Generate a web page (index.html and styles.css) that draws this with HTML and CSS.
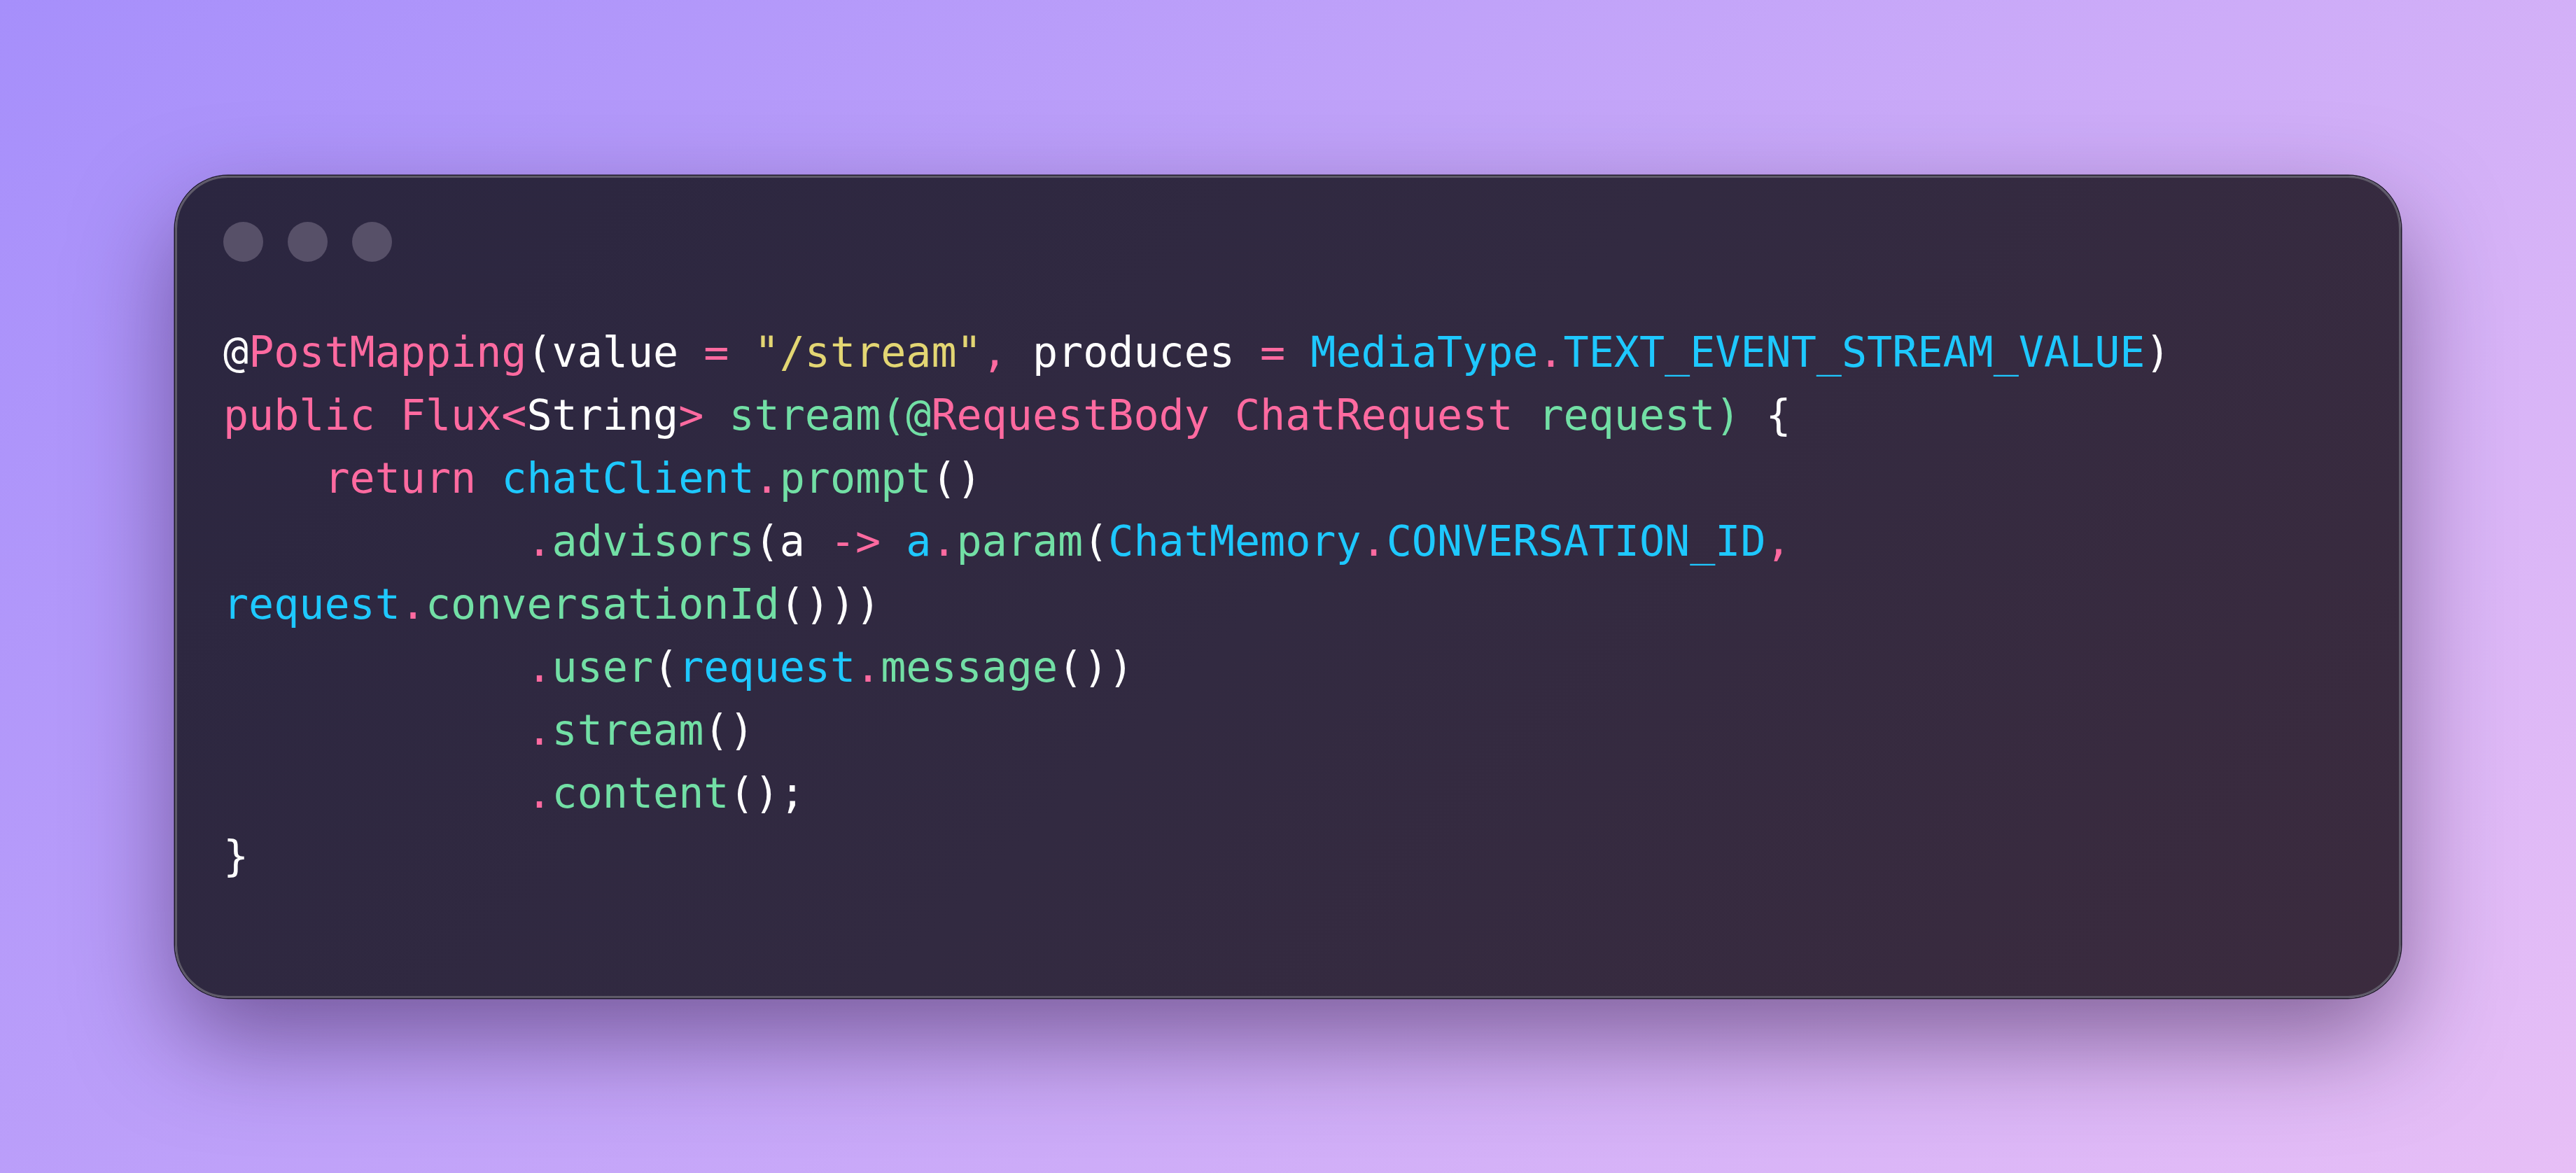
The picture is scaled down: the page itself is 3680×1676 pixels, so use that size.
FILE: index.html
```html
<!DOCTYPE html>
<html lang="en">
<head>
<meta charset="utf-8">
<title>Code snippet</title>
<link rel="stylesheet" href="styles.css">
</head>
<body>
<main class="stage">
  <section class="window">
    <div class="dots">
      <span class="dot"></span>
      <span class="dot"></span>
      <span class="dot"></span>
    </div>
<pre class="code"><span class="w">@</span><span class="k">PostMapping</span><span class="w">(value </span><span class="k">=</span> <span class="s">"/stream"</span><span class="k">,</span><span class="w"> produces </span><span class="k">=</span> <span class="c">MediaType</span><span class="k">.</span><span class="c">TEXT_EVENT_STREAM_VALUE</span><span class="w">)</span>
<span class="k">public Flux&lt;</span><span class="w">String</span><span class="k">&gt;</span> <span class="g">stream(@</span><span class="k">RequestBody ChatRequest</span> <span class="g">request)</span><span class="w"> {</span>
    <span class="k">return</span> <span class="c">chatClient</span><span class="k">.</span><span class="g">prompt</span><span class="w">()</span>
            <span class="k">.</span><span class="g">advisors</span><span class="w">(a </span><span class="k">-&gt;</span> <span class="c">a</span><span class="k">.</span><span class="g">param</span><span class="w">(</span><span class="c">ChatMemory</span><span class="k">.</span><span class="c">CONVERSATION_ID</span><span class="k">,</span>
<span class="c">request</span><span class="k">.</span><span class="g">conversationId</span><span class="w">()))</span>
            <span class="k">.</span><span class="g">user</span><span class="w">(</span><span class="c">request</span><span class="k">.</span><span class="g">message</span><span class="w">())</span>
            <span class="k">.</span><span class="g">stream</span><span class="w">()</span>
            <span class="k">.</span><span class="g">content</span><span class="w">();</span>
<span class="w">}</span></pre>
  </section>
</main>
</body>
</html>
```

FILE: styles.css
```css
html, body {
  margin: 0;
  padding: 0;
}

body {
  width: 100vw;
  height: 100vh;
  overflow: hidden;
  background: linear-gradient(135deg, #a68ffb 0%, #e7bff6 100%);
}

.stage {
  width: 100%;
  height: 100%;
  display: flex;
  align-items: center;
  justify-content: center;
}

.window {
  box-sizing: border-box;
  width: 3180px;
  padding: 63px 66px 155px 66px;
  border: 3px solid #5f5b69;
  border-radius: 76px;
  background: linear-gradient(135deg, #2b2640 0%, #322a41 50%, #3b2b3e 100%);
  box-shadow:
    0 0 0 1.5px #1c1926,
    0 60px 140px rgba(45, 18, 65, 0.5);
}

.dots {
  display: flex;
  gap: 35px;
  margin-bottom: 84px;
}

.dot {
  width: 57px;
  height: 57px;
  border-radius: 50%;
  background: #575068;
}

.code {
  margin: 0;
  font-family: "DejaVu Sans Mono", "Liberation Mono", monospace;
  font-size: 60px;
  line-height: 90px;
  color: #ffffff;
  white-space: pre;
}

.w { color: #ffffff; }
.k { color: #ff6aa0; }
.s { color: #e3d673; }
.c { color: #1ec8ff; }
.g { color: #72dfa5; }
```
